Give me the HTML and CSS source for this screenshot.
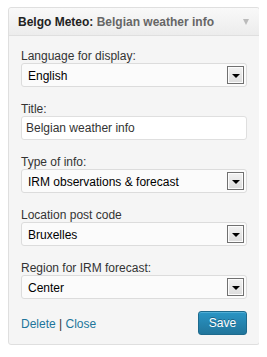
FILE: index.html
```html
<!DOCTYPE html>
<html>
<head>
<meta charset="utf-8">
<link rel="stylesheet" href="styles.css">
</head>
<body>
<div class="widget">
  <div class="widget-top">
    <h4 class="widget-title">Belgo Meteo: <span class="in-title">Belgian weather info</span></h4>
    <span class="toggle"></span>
  </div>
  <div class="widget-inside">
    <div class="field">
      <label class="label">Language for display:</label>
      <div class="select"><span class="value">English</span><span class="drop"><span class="tri"></span></span></div>
    </div>
    <div class="field">
      <label class="label">Title:</label>
      <div class="input">Belgian weather info</div>
    </div>
    <div class="field">
      <label class="label">Type of info:</label>
      <div class="select"><span class="value">IRM observations &amp; forecast</span><span class="drop"><span class="tri"></span></span></div>
    </div>
    <div class="field">
      <label class="label">Location post code</label>
      <div class="select"><span class="value">Bruxelles</span><span class="drop"><span class="tri"></span></span></div>
    </div>
    <div class="field last">
      <label class="label">Region for IRM forecast:</label>
      <div class="select"><span class="value">Center</span><span class="drop"><span class="tri"></span></span></div>
    </div>
    <div class="actions">
      <div class="links"><a href="#">Delete</a> | <a href="#">Close</a></div>
      <button class="save">Save</button>
    </div>
  </div>
</div>
</body>
</html>
```
FILE: styles.css
```css
body {
  margin: 7px 8px;
  background: #fff;
  font-family: "Liberation Sans", Arial, sans-serif;
  font-size: 12px;
  line-height: 14px;
  color: #333;
}
.widget {
  width: 250px;
  border: 1px solid #dfdfdf;
  border-radius: 3px;
  background: #f5f5f5;
}
.widget-top {
  display: flex;
  align-items: center;
  justify-content: space-between;
  height: 27px;
  padding: 0 9px;
  background: linear-gradient(#f9f9f9, #ececec);
  border-bottom: 1px solid #dfdfdf;
  border-radius: 3px 3px 0 0;
}
.widget-title {
  margin: 0;
  font-size: 12px;
  line-height: 16px;
  font-weight: bold;
  color: #222;
  padding-top: 1px;
}
.in-title {
  color: #666;
}
.toggle {
  width: 0;
  height: 0;
  border-left: 3.5px solid transparent;
  border-right: 3.5px solid transparent;
  border-top: 6px solid #bbb;
  margin-right: 1px;
  margin-top: 1px;
}
.widget-inside {
  padding: 13px 12px 9px 12px;
}
.field {
  display: flex;
  flex-direction: column;
  margin-bottom: 15px;
}
.field.last {
  margin-bottom: 12px;
}
.label {
  display: block;
  line-height: 14px;
  color: #333;
}
.select {
  display: flex;
  align-items: center;
  justify-content: space-between;
  height: 22px;
  border: 1px solid #dcdcdc;
  border-radius: 3px;
  background: #fbfbfb;
  padding: 0 2px 0 6px;
  color: #000;
}
.value {
  padding-top: 1px;
}
.drop {
  display: flex;
  align-items: center;
  justify-content: center;
  box-sizing: border-box;
  width: 17px;
  height: 18px;
  border: 1px solid #707070;
  background: linear-gradient(#f2f2f2, #dcdcdc);
  box-shadow: inset 0 0 0 1px #fcfcfc;
}
.tri {
  width: 0;
  height: 0;
  border-left: 4px solid transparent;
  border-right: 4px solid transparent;
  border-top: 4px solid #000;
  margin-top: 1px;
}
.input {
  height: 22px;
  line-height: 22px;
  border: 1px solid #dfdfdf;
  border-radius: 3px;
  background: #fff;
  padding: 0 4px;
  color: #333;
}
.actions {
  display: flex;
  align-items: center;
  justify-content: space-between;
}
.links {
  color: #333;
  padding-top: 1px;
}
.links a {
  color: #21759b;
  text-decoration: none;
}
.save {
  height: 24px;
  width: 49px;
  padding: 0;
  border: 1px solid #1e6a8d;
  border-radius: 3px;
  background: linear-gradient(#2a95c5, #21759b);
  color: #fff;
  font-family: "Liberation Sans", Arial, sans-serif;
  font-size: 12px;
  text-shadow: 0 -1px 0 rgba(0,0,0,0.3);
  box-shadow: inset 0 1px 0 rgba(120,200,230,0.5);
}
```
